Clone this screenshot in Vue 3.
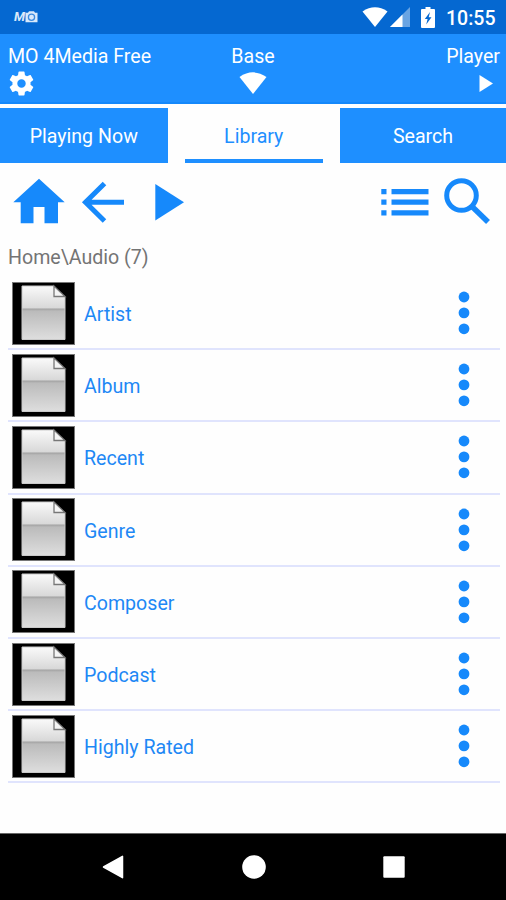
<script setup>
import { ref } from 'vue'

const tabs = ['Playing Now', 'Library', 'Search']
const activeTab = ref('Library')
const items = ref(['Artist', 'Album', 'Recent', 'Genre', 'Composer', 'Podcast', 'Highly Rated'])
</script>

<template>
  <div class="screen">
    <div class="status">
      <div class="logo">
        <span class="logo-text">M</span>
        <svg width="13" height="12" viewBox="0 0 13 12">
          <path d="M.5 1.800h2.500L4 .3h5l1 1.500h2.500v9.400H.5z" fill="#d9e9fb" />
          <circle cx="6.500" cy="6.300" r="3.100" fill="none" stroke="#3d8be0" stroke-width="1.300" />
        </svg>
      </div>
      <div class="status-right">
        <svg class="wifi" width="26" height="20" viewBox="0 0 26 20">
          <path d="M.5 4.500Q13-3.800 25.500 4.500L13 20z" />
        </svg>
        <svg class="signal" width="20" height="20" viewBox="0 0 20 20">
          <path d="M20 0v20H0z" opacity=".4" />
          <path d="M12.500 7.500V20H0z" />
        </svg>
        <svg class="battery" width="14" height="21" viewBox="0 0 14 21">
          <path d="M4.500 0h5v2H13q1 0 1 1v17q0 1-1 1H1q-1 0-1-1V3q0-1 1-1h3.500z" />
          <path d="M9 5L3.800 12h2.800L5.200 17.500l5.300-7.200H7.700z" fill="#0568d1" />
        </svg>
        <span class="time">10:55</span>
      </div>
    </div>

    <header class="header">
      <div class="col left">
        <span>MO 4Media Free</span>
        <svg class="gear" width="29" height="29" viewBox="0 0 24 24">
          <path
            d="M19.430 12.980c.04-.32.07-.64.07-.98s-.03-.66-.07-.98l2.110-1.650c.19-.15.24-.42.12-.64l-2-3.460c-.12-.22-.39-.3-.61-.22l-2.490 1c-.52-.4-1.080-.73-1.690-.98l-.38-2.650C14.460 2.180 14.250 2 14 2h-4c-.25 0-.46.18-.49.42l-.38 2.650c-.61.25-1.170.59-1.690.98l-2.490-1c-.23-.09-.49 0-.61.22l-2 3.460c-.13.22-.07.49.12.64l2.110 1.650c-.04.32-.07.65-.07.98s.03.66.07.98l-2.110 1.650c-.19.15-.24.42-.12.64l2 3.460c.12.22.39.3.61.22l2.490-1c.52.4 1.080.73 1.690.98l.38 2.650c.03.24.24.42.49.42h4c.25 0 .46-.18.49-.42l.38-2.650c.61-.25 1.170-.59 1.690-.98l2.490 1c.23.09.49 0 .61-.22l2-3.460c.12-.22.07-.49-.12-.64l-2.110-1.650zM12 15.500c-1.930 0-3.500-1.570-3.500-3.500s1.570-3.500 3.500-3.500 3.500 1.570 3.500 3.500-1.570 3.500-3.500 3.500z"
          />
        </svg>
      </div>
      <div class="col center">
        <span>Base</span>
        <svg class="base-icon" width="28" height="22" viewBox="0 0 28 22">
          <path d="M.5 5Q14-4.300 27.500 5L14 22z" />
        </svg>
      </div>
      <div class="col right">
        <span>Player</span>
        <svg class="player-icon" width="14" height="17" viewBox="0 0 14 17">
          <path d="M.5 0L14 8.500.5 17z" />
        </svg>
      </div>
    </header>

    <nav class="tabs">
      <button
        v-for="tab in tabs"
        :key="tab"
        class="tab"
        :class="{ active: tab === activeTab }"
        @click="activeTab = tab"
      >
        {{ tab }}
      </button>
    </nav>

    <div class="toolbar">
      <svg class="home" width="52" height="46" viewBox="13 178 52 46">
        <path d="M39 178.800L64.700 202.300H58V223.300H44.500V207H33.500V223.300H20.700V202.300H13.300z" />
      </svg>
      <svg class="back" width="44" height="46" viewBox="81 179 44 46">
        <path d="M104.500 183.500L85.500 202.300 104.500 221M85.500 202.300H124" class="line" />
      </svg>
      <svg class="play" width="30" height="46" viewBox="155 179 30 46">
        <path d="M155.300 184L184 202.300 155.300 220.500z" />
      </svg>
      <svg class="list-icon" width="49" height="46" viewBox="381 179 49 46">
        <path
          d="M381.300 189h5.200v5.200h-5.200zM391.500 189h37v5.200h-37zM381.300 199.600h5.200v5.200h-5.200zM391.500 199.600h37v5.200h-37zM381.300 210.200h5.200v5.200h-5.200zM391.500 210.200h37v5.200h-37z"
        />
      </svg>
      <svg class="search-icon" width="48" height="46" viewBox="443 178 48 46">
        <circle cx="461.500" cy="195.500" r="14.800" class="line" />
        <path d="M471.500 206L488 222" class="line thick" />
      </svg>
    </div>

    <div class="path">Home\Audio (7)</div>

    <ul class="list">
      <li v-for="item in items" :key="item" class="row">
        <svg class="thumb" width="63" height="63" viewBox="0 0 63 63">
          <defs>
            <linearGradient id="page" x1="0" y1="0" x2="0" y2="1">
              <stop offset="0" stop-color="#fafafa" />
              <stop offset=".41" stop-color="#d8d8d8" />
              <stop offset=".43" stop-color="#a4a4a4" />
              <stop offset=".47" stop-color="#bbb" />
              <stop offset="1" stop-color="#dedede" />
            </linearGradient>
          </defs>
          <rect x=".5" y=".5" width="62" height="62" stroke="#777" />
          <path d="M10 4h32l11 11v42.500H10z" fill="url(#page)" stroke="#c9c9c9" />
          <path d="M42 4v10.500h11z" fill="#f4f4f4" stroke="#777" stroke-width="1.300" />
        </svg>
        <span class="name">{{ item }}</span>
        <svg class="more" width="12" height="44" viewBox="0 0 12 44">
          <circle cx="6" cy="6" r="5.400" />
          <circle cx="6" cy="21.900" r="5.400" />
          <circle cx="6" cy="37.800" r="5.400" />
        </svg>
      </li>
    </ul>

    <footer class="nav">
      <svg width="22" height="24" viewBox="0 0 22 24">
        <path d="M20.500 1.300v21.400L1.500 12z" stroke="#fff" stroke-width="1.500" stroke-linejoin="round" />
      </svg>
      <svg width="24" height="24" viewBox="0 0 24 24">
        <circle cx="12" cy="12" r="11.800" />
      </svg>
      <svg width="22" height="22" viewBox="0 0 22 22">
        <rect x=".3" y=".3" width="21.400" height="21.400" rx="1" />
      </svg>
    </footer>
  </div>
</template>

<style>
body {
  margin: 0;
  background: #fff;
}
</style>

<style scoped>
.screen {
  display: flex;
  flex-direction: column;
  width: 506px;
  height: 900px;
  overflow: hidden;
  background: #fefefe;
  font-family: Roboto, 'Liberation Sans', sans-serif;
  font-size: 19.6px;
}

svg {
  display: block;
  flex: none;
}

.status {
  display: flex;
  justify-content: space-between;
  height: 34px;
  flex: none;
  background: #0568d1;
  color: #fff;
  fill: #fff;
}
.logo {
  display: flex;
  padding: 11px 0 0 14px;
}
.logo-text {
  width: 11px;
  font-size: 13px;
  line-height: 12px;
  font-weight: 700;
  font-style: italic;
  color: #d9e9fb;
}
.status-right {
  display: flex;
  align-items: flex-start;
  padding: 7px 10px 0 0;
}
.signal {
  margin-left: 2px;
}
.battery {
  margin-left: 11px;
}
.time {
  width: 50px;
  margin-left: 11px;
  font-size: 19.5px;
  line-height: 23px;
  font-weight: 500;
}

.header {
  display: grid;
  grid-template-columns: 1fr 1fr 1fr;
  box-sizing: border-box;
  height: 70px;
  flex: none;
  padding: 11px 6px 0 8px;
  background: #1e8fff;
  border-bottom: 2px solid #1488fb;
  color: #fff;
  fill: #fff;
  line-height: 24px;
}
.col {
  display: flex;
  flex-direction: column;
}
.center {
  align-items: center;
  padding-right: 2px;
}
.right {
  align-items: flex-end;
}
.gear {
  margin: 0 0 0 -1px;
}
.base-icon {
  margin-top: 3px;
}
.player-icon {
  margin: 6px 7px 0 0;
}

.tabs {
  display: grid;
  grid-template-columns: 167.5px 138px 166px;
  justify-content: space-between;
  height: 55.5px;
  flex: none;
  margin-top: 3.5px;
}
.tab {
  border: 0;
  padding: 2px 0 0;
  background: #1e8fff;
  color: #fff;
  font: inherit;
}
.tab.active {
  padding-top: 6px;
  background: transparent;
  border-bottom: 4px solid #1e8fff;
  color: #1e8fff;
}

.toolbar {
  display: flex;
  align-items: flex-start;
  height: 81px;
  flex: none;
  box-sizing: border-box;
  padding: 15px 15px 0 13px;
  fill: #1689fb;
}
.back {
  margin: 1px 0 0 16px;
}
.play {
  margin: 1px 0 0 30px;
}
.list-icon {
  margin: 1px 13px 0 auto;
}
.line {
  fill: none;
  stroke: #1689fb;
  stroke-width: 5px;
}
.thick {
  stroke-width: 5.5px;
}

.path {
  height: 34px;
  flex: none;
  padding-left: 8px;
  line-height: 28px;
  color: #747474;
}

.list {
  list-style: none;
  margin: 0 6px 0 8px;
  padding: 0;
}
.row {
  display: flex;
  align-items: center;
  box-sizing: border-box;
  height: 72.2px;
  padding: 0 30px 0 4px;
  border-bottom: 2px solid #e0e4fd;
}
.name {
  margin-left: 9px;
  padding-top: 3px;
  color: #1e88f5;
}
.more {
  margin-left: auto;
  fill: #1689fb;
}

.nav {
  display: flex;
  align-items: center;
  justify-content: space-between;
  box-sizing: border-box;
  height: 67px;
  flex: none;
  margin-top: auto;
  padding: 0 101px 0 102px;
  background: #000;
  border-top: 1px solid #666;
  fill: #fff;
}
</style>
